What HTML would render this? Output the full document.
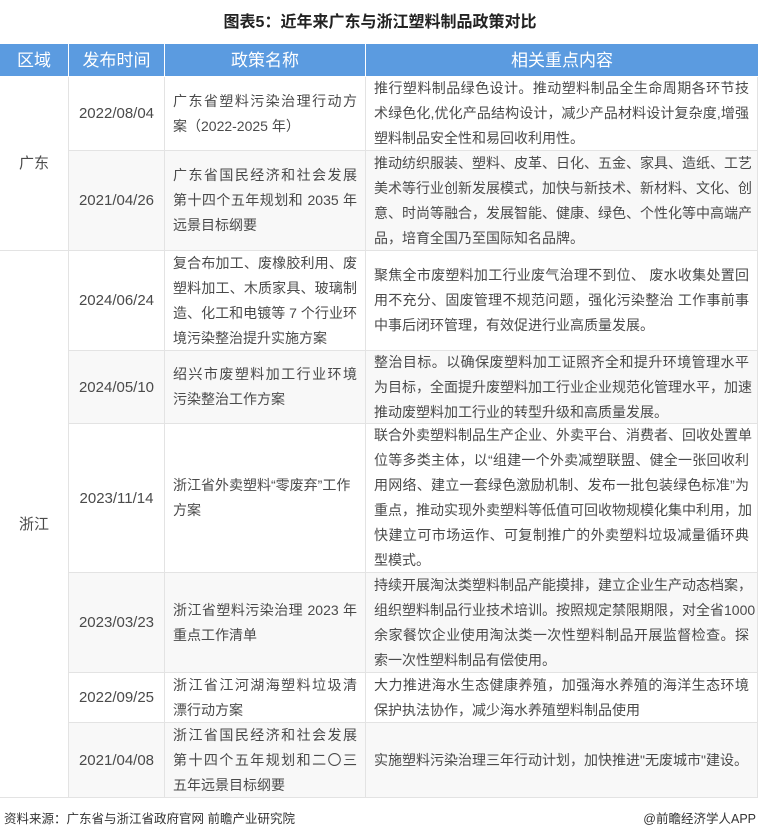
<!DOCTYPE html>
<html><head><meta charset="utf-8"><style>
*{margin:0;padding:0;box-sizing:border-box}
body{width:760px;height:838px;background:#fff;font-family:"Liberation Sans","Noto Sans CJK SC",sans-serif;color:#4a4a4a;position:relative;overflow:hidden}
.title{position:absolute;top:8px;left:0;width:760px;text-align:center;font-size:16px;font-weight:bold;color:#222}
.c{position:absolute;border-right:1px solid #e3e3e3;border-bottom:1px solid #e3e3e3;font-size:14px;line-height:25px;display:flex;align-items:center}
.g{background:#f8f8f8}
.h{background:#5b9be0;color:#fff;font-size:17px;justify-content:center;border-color:#fff;border-right:1px solid #fff}
.d{justify-content:center;font-size:15px}
.t{padding:0 8px;flex-direction:column;justify-content:center;align-items:stretch}
.t div{white-space:nowrap;text-align:justify;text-align-last:justify}
.t div.l{text-align-last:left}
.src{position:absolute;top:808px;left:4px;font-size:12.5px;color:#333}
.app{position:absolute;top:808px;right:4px;font-size:12.5px;color:#333}
</style></head><body>
<div class="title">图表5：近年来广东与浙江塑料制品政策对比</div>

<div class="c h" style="left:0;top:44px;width:69px;height:33px">区域</div>
<div class="c h" style="left:69px;top:44px;width:96px;height:33px">发布时间</div>
<div class="c h" style="left:165px;top:44px;width:201px;height:33px">政策名称</div>
<div class="c h" style="left:366px;top:44px;width:392px;height:33px;border-right:none">相关重点内容</div>

<div class="c d" style="left:0;top:77px;width:69px;height:174px">广东</div>
<div class="c d" style="left:0;top:251px;width:69px;height:547px">浙江</div>

<div class="c d" style="left:69px;top:77px;width:96px;height:74px">2022/08/04</div>
<div class="c t" style="left:165px;top:77px;width:201px;height:74px"><div>广东省塑料污染治理行动方</div><div class="l">案（2022-2025 年）</div></div>
<div class="c t" style="left:366px;top:77px;width:392px;height:74px"><div>推行塑料制品绿色设计。推动塑料制品全生命周期各环节技</div><div>术绿色化,优化产品结构设计，减少产品材料设计复杂度,增强</div><div class="l">塑料制品安全性和易回收利用性。</div></div>

<div class="c d g" style="left:69px;top:151px;width:96px;height:100px">2021/04/26</div>
<div class="c t g" style="left:165px;top:151px;width:201px;height:100px"><div>广东省国民经济和社会发展</div><div>第十四个五年规划和 2035 年</div><div class="l">远景目标纲要</div></div>
<div class="c t g" style="left:366px;top:151px;width:392px;height:100px"><div>推动纺织服装、塑料、皮革、日化、五金、家具、造纸、工艺</div><div>美术等行业创新发展模式，加快与新技术、新材料、文化、创</div><div>意、时尚等融合，发展智能、健康、绿色、个性化等中高端产</div><div class="l">品，培育全国乃至国际知名品牌。</div></div>

<div class="c d" style="left:69px;top:251px;width:96px;height:100px">2024/06/24</div>
<div class="c t" style="left:165px;top:251px;width:201px;height:100px"><div>复合布加工、废橡胶利用、废</div><div>塑料加工、木质家具、玻璃制</div><div>造、化工和电镀等 7 个行业环</div><div class="l">境污染整治提升实施方案</div></div>
<div class="c t" style="left:366px;top:251px;width:392px;height:100px"><div>聚焦全市废塑料加工行业废气治理不到位、 废水收集处置回</div><div>用不充分、固废管理不规范问题，强化污染整治 工作事前事</div><div class="l">中事后闭环管理，有效促进行业高质量发展。</div></div>

<div class="c d g" style="left:69px;top:351px;width:96px;height:73px">2024/05/10</div>
<div class="c t g" style="left:165px;top:351px;width:201px;height:73px"><div>绍兴市废塑料加工行业环境</div><div class="l">污染整治工作方案</div></div>
<div class="c t g" style="left:366px;top:351px;width:392px;height:73px"><div>整治目标。以确保废塑料加工证照齐全和提升环境管理水平</div><div>为目标，全面提升废塑料加工行业企业规范化管理水平，加速</div><div class="l">推动废塑料加工行业的转型升级和高质量发展。</div></div>

<div class="c d" style="left:69px;top:424px;width:96px;height:149px">2023/11/14</div>
<div class="c t" style="left:165px;top:424px;width:201px;height:149px"><div class="l">浙江省外卖塑料“零废弃”工作</div><div class="l">方案</div></div>
<div class="c t" style="left:366px;top:424px;width:392px;height:149px"><div>联合外卖塑料制品生产企业、外卖平台、消费者、回收处置单</div><div>位等多类主体，以“组建一个外卖减塑联盟、健全一张回收利</div><div>用网络、建立一套绿色激励机制、发布一批包装绿色标准”为</div><div>重点，推动实现外卖塑料等低值可回收物规模化集中利用，加</div><div>快建立可市场运作、可复制推广的外卖塑料垃圾减量循环典</div><div class="l">型模式。</div></div>

<div class="c d g" style="left:69px;top:573px;width:96px;height:100px">2023/03/23</div>
<div class="c t g" style="left:165px;top:573px;width:201px;height:100px"><div>浙江省塑料污染治理 2023 年</div><div class="l">重点工作清单</div></div>
<div class="c t g" style="left:366px;top:573px;width:392px;height:100px"><div>持续开展淘汰类塑料制品产能摸排，建立企业生产动态档案，</div><div>组织塑料制品行业技术培训。按照规定禁限期限，对全省1000</div><div>余家餐饮企业使用淘汰类一次性塑料制品开展监督检查。探</div><div class="l">索一次性塑料制品有偿使用。</div></div>

<div class="c d" style="left:69px;top:673px;width:96px;height:50px">2022/09/25</div>
<div class="c t" style="left:165px;top:673px;width:201px;height:50px"><div>浙江省江河湖海塑料垃圾清</div><div class="l">漂行动方案</div></div>
<div class="c t" style="left:366px;top:673px;width:392px;height:50px"><div>大力推进海水生态健康养殖，加强海水养殖的海洋生态环境</div><div class="l">保护执法协作，减少海水养殖塑料制品使用</div></div>

<div class="c d g" style="left:69px;top:723px;width:96px;height:75px">2021/04/08</div>
<div class="c t g" style="left:165px;top:723px;width:201px;height:75px"><div>浙江省国民经济和社会发展</div><div>第十四个五年规划和二〇三</div><div class="l">五年远景目标纲要</div></div>
<div class="c t g" style="left:366px;top:723px;width:392px;height:75px"><div class="l">实施塑料污染治理三年行动计划，加快推进"无废城市"建设。</div></div>

<div class="src">资料来源：广东省与浙江省政府官网 前瞻产业研究院</div>
<div class="app">@前瞻经济学人APP</div>
</body></html>
